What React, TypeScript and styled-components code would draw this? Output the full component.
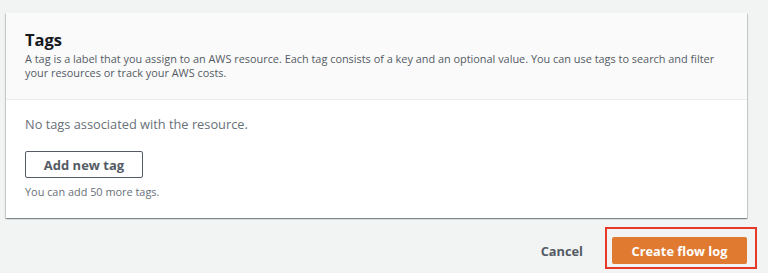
import React from "react";
import styled, { createGlobalStyle } from "styled-components";

const GlobalStyle = createGlobalStyle`
  html, body {
    margin: 0;
    padding: 0;
    background: #f2f3f3;
    font-family: "Open Sans", "Liberation Sans", sans-serif;
    color: #16191f;
  }
`;

const Page = styled.div`
  width: 768px;
  height: 273px;
  padding-top: 13px;
  box-sizing: border-box;
  overflow: hidden;
`;

const Card = styled.section`
  margin-left: 6px;
  width: 741px;
  background: #ffffff;
  box-shadow: 0 1px 1px 0 rgba(0, 28, 36, 0.3),
    1px 1px 1px 0 rgba(0, 28, 36, 0.15),
    -1px 1px 1px 0 rgba(0, 28, 36, 0.15);
`;

const Header = styled.div`
  background: #fafafa;
  border-bottom: 1px solid #eaeded;
  padding: 17px 19px 19px 19px;
`;

const Title = styled.h2`
  margin: 0;
  font-size: 16.5px;
  line-height: 20px;
  font-weight: 700;
  color: #16191f;
`;

const Description = styled.p`
  margin: 2px 0 0;
  font-size: 10.9px;
  line-height: 14px;
  color: #545b64;
`;

const Body = styled.div`
  padding: 14px 19px 18px 19px;
`;

const EmptyText = styled.p`
  margin: 0;
  font-size: 12.8px;
  line-height: 20px;
  color: #687078;
`;

const OutlineButton = styled.button`
  margin-top: 17px;
  width: 118px;
  height: 27px;
  border: 1px solid #545b64;
  border-radius: 2px;
  background: #ffffff;
  color: #545b64;
  font-family: inherit;
  font-size: 13px;
  font-weight: 700;
  padding: 0;
  display: block;
`;

const Hint = styled.p`
  margin: 6px 0 0;
  font-size: 10.9px;
  line-height: 16px;
  color: #687078;
`;

const Footer = styled.div`
  display: flex;
  justify-content: flex-end;
  align-items: center;
  gap: 22px;
  margin-top: 9px;
  padding-right: 11px;
`;

const TextButton = styled.button`
  border: none;
  background: none;
  padding: 0;
  margin-top: 5px;
  font-family: inherit;
  font-size: 12.8px;
  font-weight: 700;
  color: #545b64;
`;

const Highlight = styled.div`
  border: 2px solid #e5392b;
  padding: 8px 8px 3px 5px;
`;

const PrimaryButton = styled.button`
  width: 135px;
  height: 27px;
  border: none;
  border-radius: 2px;
  background: #e07a31;
  color: #ffffff;
  font-family: inherit;
  font-size: 12.8px;
  font-weight: 700;
  padding: 0;
  display: block;
`;

const App: React.FC = () => {
  return (
    <Page>
      <GlobalStyle />
      <Card>
        <Header>
          <Title>Tags</Title>
          <Description>
            A tag is a label that you assign to an AWS resource. Each tag
            consists of a key and an optional value. You can use tags to
            search and filter your resources or track your AWS costs.
          </Description>
        </Header>
        <Body>
          <EmptyText>No tags associated with the resource.</EmptyText>
          <OutlineButton>Add new tag</OutlineButton>
          <Hint>You can add 50 more tags.</Hint>
        </Body>
      </Card>
      <Footer>
        <TextButton>Cancel</TextButton>
        <Highlight>
          <PrimaryButton>Create flow log</PrimaryButton>
        </Highlight>
      </Footer>
    </Page>
  );
};

export default App;
